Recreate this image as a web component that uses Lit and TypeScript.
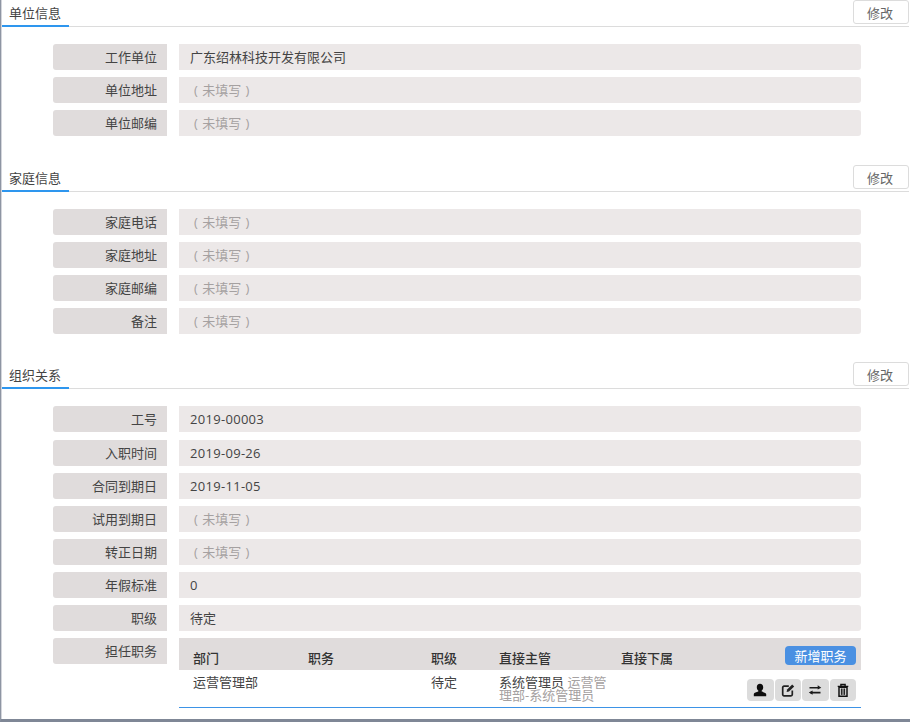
import { LitElement, html, css, svg } from "lit";
import { customElement } from "lit/decorators.js";

type Row = [string, string | null];

const sections: { title: string; rows: Row[] }[] = [
  { title: "单位信息", rows: [["工作单位", "广东绍林科技开发有限公司"], ["单位地址", null], ["单位邮编", null]] },
  { title: "家庭信息", rows: [["家庭电话", null], ["家庭地址", null], ["家庭邮编", null], ["备注", null]] },
  {
    title: "组织关系",
    rows: [
      ["工号", "2019-00003"],
      ["入职时间", "2019-09-26"],
      ["合同到期日", "2019-11-05"],
      ["试用到期日", null],
      ["转正日期", null],
      ["年假标准", "0"],
      ["职级", "待定"],
    ],
  },
];

const icons = [
  svg`<path d="M7 .8C5 .8 3.800 2.300 3.800 4.200c0 1.400.6 2.600 1.500 3.300v1.100C3.400 9.200 1.200 9.800.8 11v2.200h12.400V11c-.4-1.200-2.600-1.800-4.500-2.400V7.500c.9-.7 1.500-1.900 1.500-3.300C10.200 2.300 9 .8 7 .8z" fill="#0c0c0c"/>`,
  svg`<path d="M11.300 7.500v4a1.300 1.300 0 0 1-1.300 1.300H3a1.300 1.300 0 0 1-1.300-1.300v-7A1.300 1.300 0 0 1 3 3.200h4.800" fill="none" stroke="#222" stroke-width="1.700"/><path d="M5.600 9l.5-2.400L11.200 1.400l2 2-5.200 5.200z" fill="#222"/>`,
  svg`<path d="M1.500 4.800h9.500M2.500 9.600h10" stroke="#1a1a1a" stroke-width="1.600" fill="none"/><path d="M9.700 2.200l3.600 2.600-3.600 1.600zM4.600 7.600v4.200L.8 9.600z" fill="#1a1a1a"/>`,
  svg`<path d="M1.700 3.400h10.600M4.900 3.300V1.500h4.200v1.800" stroke="#111" stroke-width="1.400" fill="none"/><path d="M3 4.300h8v9H3z" fill="none" stroke="#111" stroke-width="1.500"/><path d="M5.400 5.500v6.400M7 5.500v6.400M8.600 5.500v6.400" stroke="#111" stroke-width="1"/>`,
];

@customElement("app-root")
export class AppRoot extends LitElement {
  static styles = css`
    :host {
      display: block;
      box-sizing: border-box;
      width: 910px;
      height: 722px;
      overflow: hidden;
      background: #fff;
      border-left: 1px solid #8e95a3;
      border-bottom: 3px solid #7f8796;
      box-shadow: inset 1px 0 0 #d4d6dc;
      padding: 1px 1px 0 1px;
      font-family: "Open Sans", "Noto Sans CJK SC", sans-serif;
      font-size: 13px;
      color: #444;
    }
    .section {
      height: 165px;
    }
    .section.s2 {
      height: 197.4px;
    }
    .head {
      display: flex;
      justify-content: space-between;
      align-items: flex-start;
      height: 25px;
      border-bottom: 1px solid #dcdcdc;
      margin-bottom: 17px;
    }
    .title {
      box-sizing: border-box;
      width: 67px;
      height: 26px;
      padding-left: 7px;
      line-height: 25px;
      color: #444;
      border-bottom: 2px solid #2e96ee;
    }
    .edit {
      box-sizing: border-box;
      width: 56px;
      height: 24px;
      margin-top: -1px;
      line-height: 24px;
      padding-right: 2px;
      text-align: center;
      border: 1px solid #dcdcdc;
      border-radius: 3px;
      color: #666;
      background: #fff;
    }
    .rows {
      display: flex;
      flex-direction: column;
      gap: 7.14px;
    }
    .row {
      display: flex;
      margin-left: 51px;
      gap: 12px;
    }
    .label {
      box-sizing: border-box;
      width: 114px;
      height: 26px;
      line-height: 27px;
      padding-right: 10px;
      text-align: right;
      background: #e0dcdc;
      border-radius: 3px 0 0 3px;
      flex: none;
    }
    .value {
      box-sizing: border-box;
      width: 682px;
      height: 26px;
      line-height: 27px;
      padding-left: 11px;
      background: #ece8e8;
      border-radius: 0 3px 3px 0;
      letter-spacing: 0.3px;
    }
    .value.cjk {
      letter-spacing: 0;
    }
    .value.empty {
      color: #a5a1a1;
      padding-left: 15px;
      letter-spacing: 0;
      word-spacing: 1px;
    }
    .table {
      width: 682px;
    }
    .thead,
    .tbody {
      display: grid;
      grid-template-columns: 115px 123px 68px 122px 1fr;
      padding: 0 5px 0 14px;
    }
    .thead {
      height: 32px;
      background: #e0dcdc;
      font-weight: 500;
      color: #333;
      box-sizing: border-box;
      padding-top: 8px;
      line-height: 24px;
    }
    .add {
      grid-area: 1 / 5;
      justify-self: end;
      width: 71px;
      height: 19px;
      line-height: 20px;
      text-align: center;
      color: #fff;
      font-weight: 400;
      background: #4a90e2;
      border-radius: 4px;
    }
    .h5 {
      grid-area: 1 / 5;
    }
    .tbody {
      height: 37px;
      box-sizing: border-box;
      border-bottom: 1px solid #3d93e6;
      margin-top: 1px;
    }
    .cell {
      line-height: 22px;
    }
    .boss {
      width: 108px;
      line-height: 13px;
      padding-top: 5px;
    }
    .sub {
      color: #a5a1a1;
    }
    .ops {
      display: flex;
      justify-content: flex-end;
      gap: 1px;
      padding-top: 8px;
    }
    .op {
      box-sizing: border-box;
      width: 26.5px;
      height: 22px;
      background: #dcdcdc;
      border-radius: 4px;
      display: flex;
      align-items: center;
      justify-content: center;
    }
    .op svg {
      width: 14px;
      height: 14px;
    }
  `;

  render() {
    return html`
      ${sections.map(
        (s, i) => html`
          <div class="section ${i === 1 ? "s2" : ""}">
            <div class="head">
              <div class="title">${s.title}</div>
              <div class="edit">修改</div>
            </div>
            <div class="rows">
              ${s.rows.map(
                ([k, v]) => html`
                  <div class="row">
                    <div class="label">${k}</div>
                    <div class="value ${v === null ? "empty" : ""} ${v && /[^\x00-\x7f]/.test(v) ? "cjk" : ""}">
                      ${v === null ? "( 未填写 )" : v}
                    </div>
                  </div>
                `
              )}
              ${i === 2
                ? html`
                    <div class="row">
                      <div class="label">担任职务</div>
                      <div class="table">
                        <div class="thead">
                          <div>部门</div>
                          <div>职务</div>
                          <div>职级</div>
                          <div>直接主管</div>
                          <div class="h5">直接下属</div>
                          <div class="add">新增职务</div>
                        </div>
                        <div class="tbody">
                          <div class="cell">运营管理部</div>
                          <div class="cell"></div>
                          <div class="cell">待定</div>
                          <div class="boss">系统管理员 <span class="sub">运营管理部-系统管理员</span></div>
                          <div class="ops">
                            ${icons.map((p) => html`<div class="op"><svg viewBox="0 0 14 14">${p}</svg></div>`)}
                          </div>
                        </div>
                      </div>
                    </div>
                  `
                : ""}
            </div>
          </div>
        `
      )}
    `;
  }
}
